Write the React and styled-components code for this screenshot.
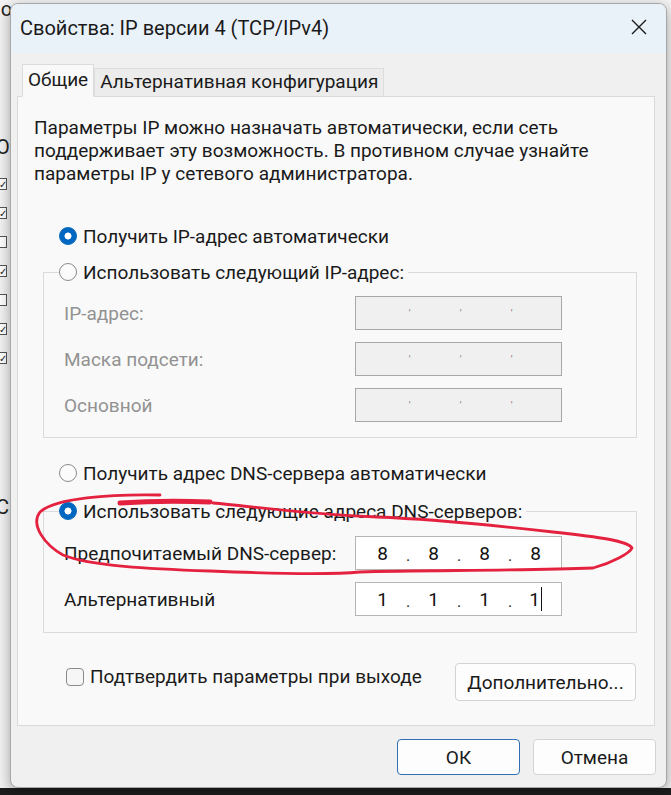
import styled, { createGlobalStyle } from "styled-components"

const GlobalStyle = createGlobalStyle`
  html, body { margin: 0; padding: 0; }
  body {
    width: 671px;
    height: 795px;
    overflow: hidden;
    font-family: Roboto, "Noto Sans", sans-serif;
    color: #1b1b1b;
  }
`

const Screen = styled.div`
  position: relative;
  width: 671px;
  height: 795px;
  background: #dcdcdc;
  overflow: hidden;
`

const BackWindow = styled.div`
  height: 788px;
  background: #f3f3f3;
  display: flex;
  flex-direction: column;
  font-size: 20px;
  color: #222;
`

const BackText = styled.div`
  height: ${p => p.$h}px;
  line-height: ${p => p.$h}px;
  margin-left: -4px;
  white-space: nowrap;
`

const BackCheck = styled.div`
  width: 9px;
  height: 12px;
  margin: 0 0 17px -2px;
  border: 1px solid #555;
  background: #fff;
  font-size: 10px;
  line-height: 12px;
  box-sizing: border-box;
  text-align: right;
`

const Taskbar = styled.div`
  height: 7px;
  background: #1d1d1d;
`

const Dialog = styled.div`
  position: absolute;
  left: 10px;
  top: 3px;
  width: 657px;
  height: 785px;
  box-sizing: border-box;
  border: 1px solid #a7a7a7;
  border-radius: 8px;
  background: #f0f0f0;
  overflow: hidden;
  display: flex;
  flex-direction: column;
  box-shadow: 0 4px 14px rgba(0,0,0,0.35);
`

const TitleBar = styled.div`
  height: 49px;
  flex: none;
  background: #eaf2f9;
  display: flex;
  align-items: center;
  justify-content: space-between;
  padding: 0 18px 0 9px;
`

const Title = styled.div`
  font-size: 20px;
  color: #1a1a1a;
  margin-top: -2px;
`

const Close = styled.div`
  width: 18px;
  height: 18px;
  display: flex;
  margin-top: -4px;
`

const Body = styled.div`
  flex: 1;
  display: flex;
  flex-direction: column;
  padding: 11px 11px 0 6px;
`

const Tabs = styled.div`
  display: flex;
  align-items: flex-end;
  height: 32px;
  padding-left: 5px;
  position: relative;
  z-index: 1;
`

const Tab = styled.div`
  height: ${p => (p.$active ? 33 : 28)}px;
  padding: 0 5px 2px;
  display: flex;
  align-items: center;
  font-size: 19px;
  background: ${p => (p.$active ? "#f9f9f9" : "#ececec")};
  border: 1px solid #dcdcdc;
  border-bottom: ${p => (p.$active ? "1px solid #f9f9f9" : "none")};
  box-sizing: border-box;
  margin-bottom: ${p => (p.$active ? -1 : 0)}px;
`

const Panel = styled.div`
  height: 630px;
  box-sizing: border-box;
  background: #f9f9f9;
  border: 1px solid #dadada;
  padding: 19px 17px 0 25px;
  display: flex;
  flex-direction: column;
`

const Intro = styled.p`
  margin: 0 0 0 -9px;
  font-size: 19px;
  line-height: 23px;
  color: #1a1a1a;
`

const RadioRow = styled.label`
  display: flex;
  align-items: center;
  gap: 6px;
  font-size: 19px;
  color: #1a1a1a;
  margin-left: 16px;
  height: 24px;
  white-space: nowrap;
`

const RadioDot = styled.span`
  width: 18px;
  height: 18px;
  border-radius: 50%;
  box-sizing: border-box;
  flex: none;
  ${p => p.$on
    ? `border: 1px solid #0067c0; background: radial-gradient(circle, #fff 0 3.2px, #0067c0 3.8px);`
    : `background: #fbfbfb; border: 1px solid #8b8b8b;`}
`

const Group = styled.fieldset`
  margin: 0;
  padding: ${p => p.$top}px 0 ${p => p.$bottom}px 20px;
  border: 1px solid #dadada;
  display: flex;
  flex-direction: column;
  gap: 12px;
`

const GroupLegend = styled.legend`
  padding: 0 4px 0 0;
  margin-left: -5px;
  & > label { margin-left: 0; }
`

const FieldRow = styled.div`
  display: flex;
  align-items: center;
  justify-content: space-between;
  padding-right: 74px;
`

const FieldLabel = styled.span`
  font-size: 19px;
  color: ${p => (p.$disabled ? "#929292" : "#1a1a1a")};
`

const IpBox = styled.div`
  width: 207px;
  height: 34px;
  box-sizing: border-box;
  border: 1px solid ${p => (p.$disabled ? "#a8a8a8" : "#b5b5b5")};
  background: ${p => (p.$disabled ? "#f0f0f0" : "#ffffff")};
  display: grid;
  grid-template-columns: 6px 41px 10px 41px 10px 41px 10px 41px 1fr;
  align-items: center;
  font-size: 19px;
  color: #111;
`

const Octet = styled.span`
  text-align: center;
  display: flex;
  justify-content: center;
  align-items: center;
`

const Dot = styled.span`
  text-align: center;
  font-size: ${p => (p.$disabled ? 10 : 16)}px;
  color: ${p => (p.$disabled ? "#7a7a7a" : "#222")};
  margin-top: ${p => (p.$disabled ? 0 : 5)}px;
  padding-left: ${p => (p.$disabled ? 3 : 0)}px;
`

const Caret = styled.span`
  width: 1px;
  height: 24px;
  margin-left: 1px;
  background: #111;
`

const Gap = styled.div`
  height: ${p => p.$h}px;
  flex: none;
`

const BottomRow = styled.div`
  display: flex;
  align-items: center;
  justify-content: space-between;
  padding-right: 1px;
`

const CheckRow = styled.label`
  display: flex;
  align-items: center;
  gap: 6px;
  font-size: 19px;
  margin-left: 23px;
  margin-top: -11px;
`

const CheckBox = styled.span`
  width: 18px;
  height: 18px;
  box-sizing: border-box;
  border: 1px solid #8b8b8b;
  border-radius: 4px;
  background: #f6f6f6;
`

const Button = styled.div`
  width: ${p => p.$w}px;
  height: ${p => p.$h}px;
  box-sizing: border-box;
  display: flex;
  align-items: center;
  justify-content: center;
  font-size: 19px;
  color: #1a1a1a;
  background: #fdfdfd;
  border: 1px solid ${p => (p.$primary ? "#2f6fb2" : "#d3d3d3")};
  border-radius: 4px;
`

const Footer = styled.div`
  display: flex;
  justify-content: flex-end;
  gap: 13px;
  padding: 13px 0 0;
  margin-right: -1px;
`

const Scribble = styled.svg`
  position: absolute;
  left: 0;
  top: 0;
  pointer-events: none;
`

function IpField({ values, disabled, caret }) {
  const parts = values || ["", "", "", ""]
  const cells = [<span key="pad" />]
  parts.forEach((v, i) => {
    cells.push(
      <Octet key={"o" + i}>
        {v}
        {caret && i === 3 && <Caret />}
      </Octet>
    )
    if (i < 3) {
      cells.push(
        <Dot key={"d" + i} $disabled={disabled}>{disabled ? "'" : "."}</Dot>
      )
    }
  })
  cells.push(<span key="end" />)
  return <IpBox $disabled={disabled}>{cells}</IpBox>
}

function Radio({ on, children }) {
  return (
    <RadioRow>
      <RadioDot $on={on} />
      {children}
    </RadioRow>
  )
}

export default function App() {
  return (
    <Screen>
      <GlobalStyle />
      <BackWindow>
        <BackText $h={18}>lo</BackText>
        <Gap $h={118} />
        <BackText $h={22}>От</BackText>
        <Gap $h={20} />
        {[1, 1, 0, 1, 0, 1, 1].map((c, i) => (
          <BackCheck key={i}>{c ? "✓" : ""}</BackCheck>
        ))}
        <Gap $h={116} />
        <BackText $h={20}>С</BackText>
      </BackWindow>
      <Taskbar />
      <Dialog>
        <TitleBar>
          <Title>Свойства: IP версии 4 (TCP/IPv4)</Title>
          <Close>
            <svg width="18" height="18" viewBox="0 0 18 18">
              <path d="M2 2 L16 16 M16 2 L2 16" stroke="#1a1a1a" strokeWidth="1.4" fill="none" />
            </svg>
          </Close>
        </TitleBar>
        <Body>
          <Tabs>
            <Tab $active>Общие</Tab>
            <Tab>Альтернативная конфигурация</Tab>
          </Tabs>
          <Panel>
            <Intro>
              Параметры IP можно назначать автоматически, если сеть
              поддерживает эту возможность. В противном случае узнайте
              параметры IP у сетевого администратора.
            </Intro>
            <Gap $h={39} />
            <Radio on>Получить IP-адрес автоматически</Radio>
            <Gap $h={12} />
            <Group $top={12} $bottom={15}>
              <GroupLegend>
                <Radio>Использовать следующий IP-адрес:</Radio>
              </GroupLegend>
              <FieldRow>
                <FieldLabel $disabled>IP-адрес:</FieldLabel>
                <IpField disabled />
              </FieldRow>
              <FieldRow>
                <FieldLabel $disabled>Маска подсети:</FieldLabel>
                <IpField disabled />
              </FieldRow>
              <FieldRow>
                <FieldLabel $disabled>Основной</FieldLabel>
                <IpField disabled />
              </FieldRow>
            </Group>
            <Gap $h={23} />
            <Radio>Получить адрес DNS-сервера автоматически</Radio>
            <Gap $h={14} />
            <Group $top={13} $bottom={16}>
              <GroupLegend>
                <Radio on>Использовать следующие адреса DNS-серверов:</Radio>
              </GroupLegend>
              <FieldRow>
                <FieldLabel>Предпочитаемый DNS-сервер:</FieldLabel>
                <IpField values={["8", "8", "8", "8"]} />
              </FieldRow>
              <FieldRow>
                <FieldLabel>Альтернативный</FieldLabel>
                <IpField values={["1", "1", "1", "1"]} caret />
              </FieldRow>
            </Group>
            <Gap $h={30} />
            <BottomRow>
              <CheckRow>
                <CheckBox />
                Подтвердить параметры при выходе
              </CheckRow>
              <Button $w={181} $h={38}>Дополнительно...</Button>
            </BottomRow>
          </Panel>
          <Footer>
            <Button $w={123} $h={36} $primary>ОК</Button>
            <Button $w={123} $h={36}>Отмена</Button>
          </Footer>
        </Body>
      </Dialog>
      <Scribble width="671" height="795" viewBox="0 0 671 795">
        <path
          d="M120 503 C150 501 185 501 210 502"
          stroke="#e4223f" strokeWidth="5" fill="none" strokeLinecap="round"
        />
        <path
          d="M160 495 C110 494 55 498 40 512 C30 525 45 545 63 555 C90 566 150 569 210 571 C280 574 330 575 360 572 C420 570 520 571 593 568 C612 563 630 553 632 548 C628 541 600 537 553 532 C500 526 430 519 377 517 C300 514 250 506 213 503"
          stroke="#e4223f" strokeWidth="2.8" fill="none" strokeLinecap="round" strokeLinejoin="round"
        />
      </Scribble>
    </Screen>
  )
}
